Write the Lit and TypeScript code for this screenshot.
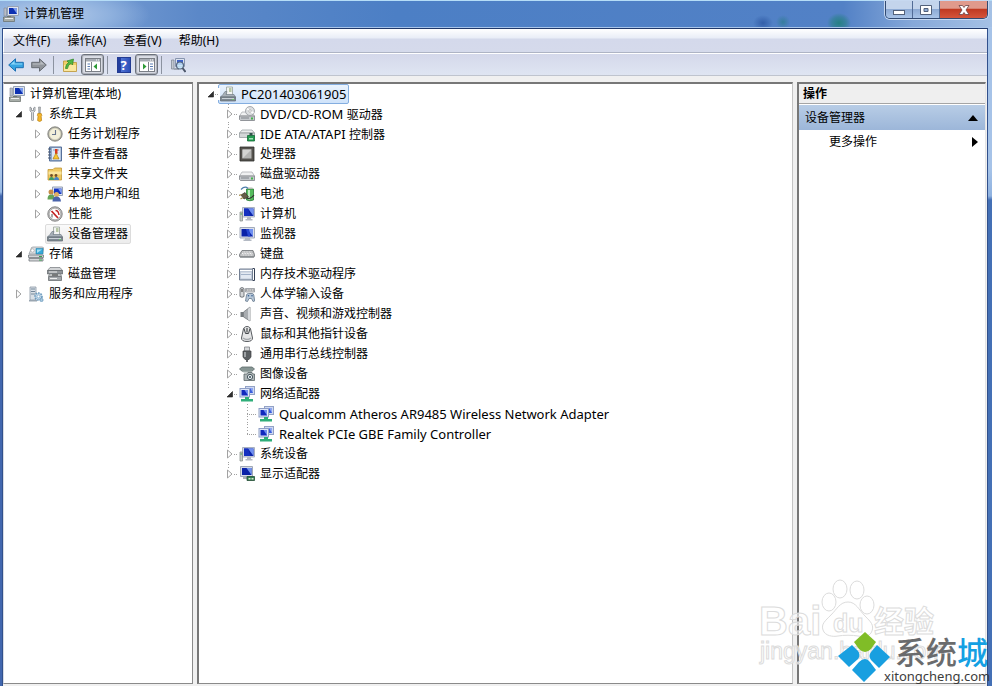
import { LitElement, html, svg, css, nothing, SVGTemplateResult } from "lit";
import { customElement, property, state } from "lit/decorators.js";
import { classMap } from "lit/directives/class-map.js";

/* ---------- shared icon fragments, all on a 16x16 grid ---------- */

const monitor = svg`
  <path d="M3.500 1.500h12v9.500h-12z" fill="#d5dbe8" stroke="#a9b1c1"/>
  <path d="M5 2.500h9.500v7.500H5z" fill="#0a22a8"/>
  <path d="M9 2.500h5.500v7.500z" fill="#6f8ff0"/>
  <path d="M5 2.500h4l2.500 7.500H5z" fill="#1430c0"/>
  <path d="M8 11h4v2H8zM6.500 13h7v1.500h-7z" fill="#b4bac4"/>`;
const drive = svg`
  <path d="M3 6h10l2.500 4H.5z" fill="#f0f1f2" stroke="#aeb1b5" stroke-width=".8"/>
  <path d="M.5 10h15v4.500H1.500L.5 13.500z" fill="#c5c8cc" stroke="#7d8187" stroke-width=".8"/>
  <path d="M2 12h8" stroke="#80858b"/><path d="M12 11.500h2v2h-2z" fill="#42b44b"/>`;
const netScreens = svg`
  <rect x="6.500" y=".5" width="9" height="8" fill="#cfd9f2" stroke="#93a2c6"/>
  <rect x="8" y="2" width="6" height="5" fill="#3a5ddb"/><path d="M11 2h3v5z" fill="#8ea7f2"/>
  <rect x="1" y="2.500" width="9.500" height="8.500" fill="#dfe7f9" stroke="#8f9fc6"/>
  <rect x="2.500" y="4" width="6.500" height="5.500" fill="#1029bd"/>
  <path d="M5.500 4H9v5.500z" fill="#6f8ef0"/>
  <path d="M6 11h4v2h4v2.500H2V13h4z" fill="#2fae79"/>`;
const devices = svg`
  <path d="M6.500 1h6v9h-6z" fill="#f3f5f3" stroke="#98a29b" stroke-width=".8"/>
  <path d="M9 2h2.500v4H9z" fill="#b8c8a5"/>
  <path d="M3 8.500l2-3h2l-1 3h8l1.500 2.500H.5z" fill="#a9b2b9" stroke="#74808a" stroke-width=".7"/>
  <path d="M.5 11h15v4H.5z" fill="#7f8a93" stroke="#5e6870" stroke-width=".7"/>
  <path d="M2 12.500h12" stroke="#c9d1d7"/><path d="M12 13.500h2" stroke="#6cc26d"/>`;
const manage = svg`
  <path d="M4.500 .5h11v9h-11z" fill="#dfe5ee" stroke="#97a2b5"/>
  <path d="M6 2h8v6H6z" fill="#0d31b2"/><path d="M10 2h4v6z" fill="#7b9bea"/>
  <path d="M1 2h2.500v8H1z" fill="#b8bec8" stroke="#7f8896" stroke-width=".6"/>
  <path d="M8 10h4v2H8z" fill="#a7adb7"/>
  <path d="M.5 11h11v4.500H.5z" fill="#a7ada8" stroke="#646b67" stroke-width=".7"/>
  <path d="M2 12.500h8" stroke="#eee"/><path d="M4 10h4v1H4z" fill="#6f7774"/>`;
const paneFrame = svg`
  <rect x=".5" y="1.500" width="15" height="13" fill="#fff" stroke="#7b7f86"/>
  <path d="M1 2h14v2.500H1z" fill="#a6abb3"/><path d="M11 3h1M13 3h1" stroke="#fff"/>`;

const icons: Record<string, SVGTemplateResult> = {
  manage,
  devices,
  monitor: svg`
    <path d="M1 1.500h14.500V12H1z" fill="#dbe0ea" stroke="#a3abbb"/>
    <path d="M2.500 3H14v7.500H2.500z" fill="#0a22a8"/>
    <path d="M8 3h6v7.500z" fill="#6f8ff0"/><path d="M7 3h3l1.500 7.500H9z" fill="#2747d2"/>
    <path d="M6 12h5v1.500H6zM4.500 13.500h8V15h-8z" fill="#b4bac4"/>`,
  tools: svg`
    <path d="M2 1v4l1.500 1.500V14q1 2 2 0V6.500L7 5V1L5.500 2v2.500h-2V2z" fill="#d9dbdd" stroke="#888d93" stroke-width=".8"/>
    <path d="M10.500 1h2l-.3 6h-1.400z" fill="#b7babd" stroke="#85898d" stroke-width=".6"/>
    <path d="M9.800 7.500h3.400l.6 2-.6 1 .4 4q-2 2-4 0l.4-4-.6-1z" fill="#f5b529" stroke="#b87f12" stroke-width=".7"/>`,
  clock: svg`
    <circle cx="8" cy="8" r="7.200" fill="#a9a9a4" stroke="#77776f" stroke-width=".8"/>
    <circle cx="8" cy="8" r="5.700" fill="#f2efda" stroke="#d9d5ba" stroke-width=".6"/>
    <path d="M8.500 4v4.500H5" fill="none" stroke="#67758e" stroke-width="1.100"/>`,
  events: svg`
    <path d="M2.500 1h12v14h-12z" fill="#8fa9cb" stroke="#56709a"/>
    <path d="M5 2h8.500v12H5z" fill="#dce7f5"/>
    <path d="M1 3h3M1 6h3M1 9h3M1 12h3" stroke="#49566c"/>
    <path d="M6 4h6M6 12h6" stroke="#8499b7"/>
    <path d="M8 3h2.500v5H8z" fill="#d8391e"/>
    <path d="M9 7l3 6H6z" fill="#f9c52f" stroke="#aa7a0d" stroke-width=".6"/>`,
  shared: svg`
    <path d="M1 3.500h5l1.500-1.500H14.500v12H1z" fill="#efc962" stroke="#c29837" stroke-width=".8"/>
    <path d="M1.500 5.500h13v3h-13z" fill="#f9e59d"/>
    <circle cx="4.500" cy="9.500" r="1.400" fill="#71502a"/><circle cx="9" cy="9.500" r="1.400" fill="#71502a"/>
    <path d="M2 14q0-3 2.500-3t2.500 3z" fill="#3c9c67"/><path d="M7 14q0-3 2.500-3t2.500 3z" fill="#4683c4"/>`,
  users: svg`
    <path d="M5.500 1h10v8.500h-10z" fill="#dfe5ee" stroke="#97a2b5"/><path d="M7 2.500h7.500v5.500H7z" fill="#1535c0"/>
    <path d="M11 2.500h3.500v5.500z" fill="#7f9cf0"/>
    <circle cx="4" cy="6" r="2.500" fill="#c58c48"/><path d="M.5 13.500q0-5 3.500-5t4 5z" fill="#64a457"/>
    <circle cx="9.500" cy="8.500" r="2.500" fill="#e0b063"/><path d="M5.500 15.500q0-5 4-5t4.500 5z" fill="#4963ab"/>`,
  perf: svg`
    <circle cx="8" cy="8" r="7.200" fill="#c6c6c6" stroke="#777" stroke-width=".9"/>
    <circle cx="8" cy="8" r="5.800" fill="#fff" stroke="#8f8f8f" stroke-width=".6"/>
    <path d="M4.500 5l6.500 7" stroke="#c22222" stroke-width="1.800"/>
    <path d="M8.500 4.500q3 0 3.500 4.500" fill="none" stroke="#c22222" stroke-width="1.400"/>
    <path d="M5 8v3.500" stroke="#555"/>`,
  storage: svg`
    <path d="M3 3q0-2 2-2h9q2 0 1.500 2l-1 5H1z" fill="#dcdfe2" stroke="#8e949a" stroke-width=".7"/>
    <path d="M8 2.500h7v5.500H8z" fill="#39a9d8" stroke="#2784ad" stroke-width=".6"/><path d="M9 3.500h5L9 7z" fill="#a7e1f5"/>
    <circle cx="4.500" cy="4.500" r="1.700" fill="#fff" stroke="#999" stroke-width=".6"/>
    <path d="M.5 9h15v2.500H.5zM1 12.500h14V15H1z" fill="#d4d6d9" stroke="#73787d" stroke-width=".8"/>
    <path d="M11 10.500h3M11 14h3" stroke="#39a34c"/>`,
  diskmgmt: svg`
    <path d="M3 1.500h10l2.500 3H.5z" fill="#d2d4d6" stroke="#74787c" stroke-width=".7"/>
    <path d="M.5 4.500h15v3.500H.5z" fill="#909498" stroke="#5d6165" stroke-width=".7"/>
    <path d="M3 8h10l1.500 2h-13z" fill="#e7e8e9" stroke="#74787c" stroke-width=".7"/>
    <path d="M1.500 10.500h13v4h-13z" fill="#a2a6aa" stroke="#5d6165" stroke-width=".7"/>
    <path d="M2 6h8M3 12.500h7" stroke="#eee"/><path d="M5 9h6" stroke="#333"/>`,
  services: svg`
    <path d="M2 1h6v13H2z" fill="#d9e0e6" stroke="#8b98a5" stroke-width=".8"/>
    <path d="M3 3h4M3 5.500h4M3 8h4" stroke="#75889a"/>
    <path d="M1 14h8v1.500H1z" fill="#9aa6b1"/>
    <circle cx="10.500" cy="10.500" r="3.500" fill="#bfd6e8" stroke="#6c9abd" stroke-width="1.600" stroke-dasharray="1.600 1"/>
    <circle cx="10.500" cy="10.500" r="1.400" fill="#fff" stroke="#6c9abd" stroke-width=".6"/>
    <circle cx="13.500" cy="14" r="1.600" fill="#a7c7df" stroke="#6c9abd" stroke-width=".8"/>`,
  dvd: svg`
    ${drive}<circle cx="11" cy="5" r="4.500" fill="#dddfe1" stroke="#94989d" stroke-width=".8"/>
    <path d="M11 5L8 2.500M11 5l3.500 2" stroke="#fff" stroke-width="1.500"/>
    <circle cx="11" cy="5" r="1.300" fill="#fff" stroke="#999" stroke-width=".6"/>`,
  ide: svg`
    <path d="M3 4h10l2.500 3H.5z" fill="#eceeee" stroke="#9da3a6" stroke-width=".8"/>
    <path d="M.5 7h15v4.500H.5z" fill="#d3d7d8" stroke="#8d9396" stroke-width=".7"/>
    <path d="M8.500 9.500h7v5.500h-7z" fill="#239b50" stroke="#0f6c34" stroke-width=".8"/>
    <path d="M10 12h4v1.500h-4z" fill="#a4dfb7"/><path d="M10.500 7h3v2.500h-3z" fill="#31544b"/>`,
  cpu: svg`
    <path d="M1 1h14v14H1z" fill="#55534e" stroke="#2e2d2b" stroke-width=".8"/>
    <path d="M3.500 3.500h9v9h-9z" fill="#b4b4b2"/><path d="M3.500 3.500h9l-9 9z" fill="#d4d4d2"/>`,
  disk: drive,
  battery: svg`
    <path d="M7.500 3h7v11q-3.500 1.500-7 0z" fill="#56bd5e" stroke="#277b35" stroke-width=".8"/>
    <path d="M9 4h2v9.500H9z" fill="#c1ebc0"/><path d="M8.500 1.500h5V3h-5z" fill="#b8bdb4"/>
    <path d="M2 3.500q4-4 7-1" fill="none" stroke="#4b7cab" stroke-width="1.200"/>
    <path d="M2 9L6 6.500l3.500 4.500L5 13z" fill="#665c49" stroke="#393328" stroke-width=".7"/>
    <path d="M0 9.500l2.500-1M1.500 13L4 11.500" stroke="#a58d4d" stroke-width="1.300"/>
    <path d="M8 12q3 2 7 -3" fill="none" stroke="#333" stroke-width="1.200"/>`,
  computer: svg`${monitor}<path d="M1 6h2.500v9H1z" fill="#c6cbc8" stroke="#7e8784" stroke-width=".7"/>
    <path d="M1.500 8h1.500" stroke="#3da34c"/>`,
  keyboard: svg`
    <path d="M3 4.500h11l1.500 4v1.500q0 1-1 1h-13q-1 0-1-1V8.500z" fill="#b4b6b8" stroke="#6e7276" stroke-width=".8"/>
    <path d="M3.500 6h9.500M3 7.500h10.500M2.500 9h11.500" stroke="#f4f4f4" stroke-dasharray="1 .6"/>
    <path d="M1 11h14" stroke="#7d8185"/>`,
  memory: svg`
    <path d="M.5 3h13v11H.5z" fill="#bfc9d8" stroke="#667489" stroke-width=".9"/>
    <path d="M2 6.500h10v6H2z" fill="#e3e9f2"/><path d="M1 4.500h12" stroke="#fff"/>
    <path d="M13.500 2.500h2v12h-2" fill="none" stroke="#354156"/>
    <path d="M2 8.500h10" stroke="#a4b3c9"/>`,
  hid: svg`
    <path d="M1 2.500q2-2 4 0v8q-2 1.500-4 0z" fill="#d5d7d9" stroke="#666b70" stroke-width=".9"/>
    <path d="M3 3v3" stroke="#333"/>
    <path d="M6.500 2.500h9v3.500h-9z" fill="#d6d8da" stroke="#878b90" stroke-width=".7"/><path d="M7 4h8" stroke="#777" stroke-dasharray="1 .7"/>
    <path d="M6.500 15l1-6q.3-1.500 2-1.500h3.500q1.500 0 1.800 1.500l.9 6-1.700.5-1.500-3H10l-1.500 3z" fill="#b6c6d7" stroke="#66788d" stroke-width=".8"/>
    <circle cx="9.500" cy="9.700" r=".8" fill="#375f91"/><circle cx="13" cy="9.700" r=".8" fill="#375f91"/>`,
  sound: svg`
    <path d="M1.500 6h3v5h-3z" fill="#777c80"/>
    <path d="M4.500 6L11 1v14l-6.500-4z" fill="#a9adb1" stroke="#6b7074" stroke-width=".7"/>
    <path d="M9 3l2-2v14l-2-1.500z" fill="#d7dadd"/>`,
  mouse: svg`
    <path d="M4 5q.5-4.500 4-4.500T12 5l1.500 7q0 3.500-5.500 3.500T2.500 12z" fill="#e5e6e7" stroke="#585c60"/>
    <path d="M5 2.500l1.500 5h3l1.500-5" fill="none" stroke="#43474b"/><path d="M7.500 2h1v4.500h-1z" fill="#292c2f"/>
    <path d="M4 12q4 3 8 0" fill="none" stroke="#a5a9ad" stroke-width="1.500"/>`,
  usb: svg`
    <path d="M5.500 1h5v4h-5z" fill="#d6d8da" stroke="#7d8185" stroke-width=".8"/>
    <path d="M4 5h8v6l-2 2.500H6L4 11z" fill="#5c6063" stroke="#3c3f42" stroke-width=".7"/>
    <path d="M5 6h2v5H5z" fill="#9fa3a6"/><path d="M8 13v3" stroke="#55595d" stroke-width="1.800"/>`,
  imaging: svg`
    <path d="M.5 3L3 1h10l2.500 2-3 2.500h-9z" fill="#879694" stroke="#5d6b69" stroke-width=".8"/>
    <path d="M3 5.500h11L12 7H5z" fill="#c8d2d0"/>
    <path d="M5 8h3l1-1.500h4L14 8h1.500v6.500H5z" fill="#acb5b6" stroke="#5c6668" stroke-width=".8"/>
    <circle cx="11" cy="11" r="2.600" fill="#ecf3f6" stroke="#46545c"/><circle cx="11" cy="11" r="1" fill="#34474f"/>`,
  network: netScreens,
  display: svg`
    <path d="M1.500 .5h12v10h-12z" fill="#d5dbe8" stroke="#a1a9b7"/>
    <path d="M3 2h9.500v7H3z" fill="#0a22a8"/><path d="M7.500 2h5v7z" fill="#7092ec"/>
    <path d="M4 11h5v2H4z" fill="#abb1bb"/>
    <path d="M8 10.500h7.500v4H8z" fill="#2d8050" stroke="#244c35" stroke-width=".8"/>
    <path d="M9.500 12h2v1.500h-2zM12.500 12h2v1.500h-2z" fill="#dbe7cb"/>`,
  back: svg`<path d="M.7 8L7.500 1.800V5.300H15.300V10.700H7.500v3.500z" fill="#37a5e2" stroke="#1c70b2" stroke-linejoin="round"/>
    <path d="M2.500 7.500L6.500 4v2.500h7.800v1z" fill="#8fd7f8"/>`,
  forward: svg`<path d="M15.300 8L8.500 1.800V5.300H.7V10.700H8.500v3.500z" fill="#91959b" stroke="#666b72" stroke-linejoin="round"/>
    <path d="M13.500 7.500L9.500 4v2.500H1.700v1z" fill="#b9bdc2"/>`,
  up: svg`<path d="M1.500 4h4.500l1.500 1.500H14.500v9h-13z" fill="#f0cf6b" stroke="#bd973a" stroke-width=".8"/>
    <path d="M2 8h12v6H2z" fill="#fae7a0"/>
    <path d="M3.500 11.500q0-4 3-6L5 4l6.500-2-1 6-1.500-1.500q-3 1-3.500 5z" fill="#51b644" stroke="#2b8424" stroke-width=".7"/>`,
  treepane: svg`${paneFrame}<path d="M6.500 5v9" stroke="#7b7f86" fill="none"/>
    <path d="M2.500 7h2.500M2.500 9.500h2.500M2.500 12h2.500" stroke="#5a7db3"/>
    <path d="M12 6.500v6L8.500 9.500z" fill="#2e9a36"/>`,
  actionpane: svg`${paneFrame}<path d="M9.500 5v9" stroke="#7b7f86"/>
    <path d="M11 7h3M11 9.500h3M11 12h3" stroke="#5a7db3"/><path d="M4 6.500v6L7.500 9.500z" fill="#2e9a36"/>`,
  scan: svg`
    <path d="M5.500 1.500h9v8h-9z" fill="#dce3f0" stroke="#8895ae"/><path d="M7 3h6v5H7z" fill="#3e61c8"/>
    <path d="M1.500 3h2.500v9H1.500z" fill="#c2c8d0" stroke="#7a8391" stroke-width=".7"/>
    <path d="M4 11h5v2H4z" fill="#a0a7b4"/>
    <circle cx="10" cy="8.500" r="3.500" fill="#c6e4f7" fill-opacity=".85" stroke="#56677f" stroke-width="1.200"/>
    <path d="M12.500 11l3 4" stroke="#4b5568" stroke-width="2"/>`,
};

const icon = (name: string) =>
  html`<svg class="icon" viewBox="0 0 16 16" width="16" height="16" aria-hidden="true">${icons[name]}</svg>`;

interface Node {
  label: string;
  icon: string;
  open?: boolean;
  selected?: boolean;
  children?: Node[];
}

const n = (label: string, icon: string, children?: Node[], open = false): Node => ({ label, icon, children, open });

const consoleTree: Node = n("计算机管理(本地)", "manage", [
  n("系统工具", "tools", [
    n("任务计划程序", "clock", []),
    n("事件查看器", "events", []),
    n("共享文件夹", "shared", []),
    n("本地用户和组", "users", []),
    n("性能", "perf", []),
    { label: "设备管理器", icon: "devices", selected: true },
  ], true),
  n("存储", "storage", [n("磁盘管理", "diskmgmt")], true),
  n("服务和应用程序", "services", []),
], true);

const deviceTree: Node = {
  ...n("PC201403061905", "devices", [
    n("DVD/CD-ROM 驱动器", "dvd", []),
    n("IDE ATA/ATAPI 控制器", "ide", []),
    n("处理器", "cpu", []),
    n("磁盘驱动器", "disk", []),
    n("电池", "battery", []),
    n("计算机", "computer", []),
    n("监视器", "monitor", []),
    n("键盘", "keyboard", []),
    n("内存技术驱动程序", "memory", []),
    n("人体学输入设备", "hid", []),
    n("声音、视频和游戏控制器", "sound", []),
    n("鼠标和其他指针设备", "mouse", []),
    n("通用串行总线控制器", "usb", []),
    n("图像设备", "imaging", []),
    n("网络适配器", "network", [
      n("Qualcomm Atheros AR9485 Wireless Network Adapter", "network"),
      n("Realtek PCIe GBE Family Controller", "network"),
    ], true),
    n("系统设备", "computer", []),
    n("显示适配器", "display", []),
  ], true),
  selected: true,
};

@customElement("tree-view")
export class TreeView extends LitElement {
  @property({ attribute: false }) root!: Node;
  @property({ type: Boolean, reflect: true }) lines = false;
  @property({ type: Boolean }) bare = false;

  static styles = css`
    :host { display: block; }
    ul { list-style: none; margin: 0; padding: 0; }
    ul ul { padding-left: 19px; }
    .bare > li > ul { padding-left: 0; }
    .row { display: flex; align-items: center; height: 20px; }
    .toggle, .spacer { flex: none; position: relative; width: 19px; height: 12px; }
    .toggle { display: block; border: 0; padding: 0; background: none; }
    .toggle svg { display: block; margin: 0 auto; }
    .item {
      display: flex; align-items: center; gap: 5px; box-sizing: border-box; height: 20px;
      margin-left: -2px; padding: 0 2px 0 1px; border: 1px solid transparent; border-radius: 2px;
      white-space: nowrap;
    }
    .icon { flex: none; display: block; }
    :host([lines]) .latin { font-size: 13px; }
    .selected { border-color: #dcdcdc; background: linear-gradient(#fafafa, #ececec); }
    :host([lines]) .selected { border-color: #84aee0; background: linear-gradient(#eaf3fd, #cfe3fa); }
    :host([lines]) ul ul > li {
      background: repeating-linear-gradient(#a0a0a0 0 1px, transparent 1px 3px) 8px 0 / 1px 100% no-repeat;
    }
    :host([lines]) ul ul > li:last-child { background-size: 1px 10px; }
    :host([lines]) .toggle { background: #fff; }
    :host([lines]) .toggle::after, :host([lines]) .spacer::after {
      content: ""; position: absolute; top: 6px; right: 1px; width: 4px; height: 1px;
      background: repeating-linear-gradient(90deg, #a0a0a0 0 1px, transparent 1px 2px);
    }
    :host([lines]) .spacer::after { width: 10px; }
  `;

  private flip(node: Node) {
    node.open = !node.open;
    this.requestUpdate();
  }

  private arrow(node: Node) {
    if (!node.children) return html`<span class="spacer"></span>`;
    return html`<button class="toggle" aria-label=${node.label} aria-expanded=${node.open ? "true" : "false"}
      @click=${() => this.flip(node)}>
      <svg viewBox="0 0 8 12" width="8" height="12">
        ${node.open
          ? svg`<path d="M6.500 3.500v5.500H1z" fill="#303030" stroke="#1c1c1c" stroke-width=".6"/>`
          : svg`<path d="M1.500 2v8L6 6z" fill="#fff" stroke="#a2a2a2"/>`}
      </svg></button>`;
  }

  private label(text: string) {
    const m = /^[\x20-\x7e]+/.exec(text);
    return m ? html`<span><span class="latin">${m[0]}</span>${text.slice(m[0].length)}</span>` : html`<span>${text}</span>`;
  }

  private node(node: Node, top = false): unknown {
    return html`<li>
      <div class="row">
        ${top && this.bare ? nothing : this.arrow(node)}
        <span class=${classMap({ item: true, selected: !!node.selected })}>${icon(node.icon)}${this.label(node.label)}</span>
      </div>
      ${node.open && node.children?.length ? html`<ul>${node.children.map((c) => this.node(c))}</ul>` : nothing}
    </li>`;
  }

  render() {
    return html`<ul class=${classMap({ bare: this.bare })}>${this.node(this.root, true)}</ul>`;
  }
}

@customElement("site-marks")
export class SiteMarks extends LitElement {
  static styles = css`
    :host { display: block; pointer-events: none; }
    svg { display: block; }
    .ghost { fill: #fff; fill-opacity: .6; stroke: #dcdcdc; stroke-width: 1; }
    .bai { font: 700 40px "Liberation Sans", sans-serif; }
    .du { font: 700 25px "Liberation Sans", sans-serif; }
    .jy { font: 700 30px "Noto Sans CJK SC", sans-serif; }
    .url { font: 400 23px "Liberation Sans", sans-serif; }
    .name { font: 500 31px "Noto Sans CJK SC", sans-serif; fill: #6a6b6d; }
    .city { fill: #14a0e3; }
    .site { font: 400 13px "Noto Sans", sans-serif; fill: #3c3c3c; }
  `;

  render() {
    return html`<svg width="234" height="110" viewBox="0 0 234 110" aria-label="xitongcheng.com">
      <g class="ghost">
        <text class="bai" x="1" y="59">Bai</text>
        <ellipse cx="71" cy="26" rx="7" ry="9"/><ellipse cx="82" cy="13" rx="7" ry="9"/>
        <ellipse cx="99" cy="14" rx="7" ry="9"/><ellipse cx="109" cy="29" rx="7" ry="9"/>
        <path d="M90 26c8 0 11 8 17 14s9 9 7 15-9 6-14 5-15-1-20 0-13 0-15-6 2-9 8-15 9-13 17-13z"/>
        <text class="du" x="75" y="56">du</text>
        <text class="jy" x="116" y="56">经验</text>
        <text class="url" x="2" y="83">jingyan.baidu.com</text>
      </g>
      <g>
        <path d="M107 56l11 10-5 7q-6 6-12 0l-5-7z" fill="#80bd27"/>
        <path d="M94 69l6 6q3 4 0 8l-9 8-11-11z" fill="#189fe0"/>
        <path d="M119 69l13 12-11 11-8-8q-3-4 0-8z" fill="#189fe0"/>
        <path d="M107 83q3 0 5 3l6 8-12 12-12-12 7-8q3-3 6-3z" fill="#189fe0"/>
      </g>
      <text class="name" x="137" y="88">系统<tspan class="city">城</tspan></text>
      <text class="site" x="126" y="105">xitongcheng.com</text>
    </svg>`;
  }
}

@customElement("app-root")
export class AppRoot extends LitElement {
  @state() private menus = ["文件(F)", "操作(A)", "查看(V)", "帮助(H)"];

  static styles = css`
    :host {
      display: flex; flex-direction: column; position: relative; box-sizing: border-box;
      min-height: 100vh; padding: 0 4px 0 3px; color: #000;
      font: 12px/20px "Noto Sans", "Noto Sans CJK SC", sans-serif;
      background:
        linear-gradient(90deg, #31508c, #31508c) 2px 28px / 1px 100% no-repeat,
        linear-gradient(#b4cdec 0 130px, #9bbce5 164px, #4267ae 168px 100%) 0 28px / 3px 100% no-repeat,
        linear-gradient(#a6c3e8 0 140px, #8fb2e0 168px, #4470b5 172px 100%) 100% 28px / 4px 100% no-repeat,
        #f0f0f0;
    }
    button { font: inherit; color: inherit; margin: 0; }
    .title {
      display: flex; align-items: flex-start; justify-content: space-between;
      height: 28px; margin: 0 -4px 0 -3px; padding: 0 4px 0 3px;
      box-sizing: border-box; border-top: 1px solid #b5ddf7; border-bottom: 1px solid #a9c5ea;
      background:
        radial-gradient(ellipse 100px 30px at 50px 14px, #b9cfec, #8fb1de 60%, transparent),
        radial-gradient(ellipse 10px 8px at 763px 22px, #335fa9, transparent),
        radial-gradient(ellipse 12px 10px at 839px 22px, #268083, #26808388 60%, transparent),
        radial-gradient(ellipse 7px 7px at 783px 21px, #367d9d, transparent),
        linear-gradient(90deg, #8bacdb, #5b88c8 20%, #4c7fc5 40%, #5281c6 85%, #86a8d9 92%, #a5c1e5);
    }
    .caption { display: flex; align-items: center; gap: 5px; height: 26px; font-weight: 400; }
    h1, h2 { margin: 0; font-size: 12px; }
    h1 { font-weight: 400; }
    .icon { flex: none; display: block; }
    .winbtns {
      display: flex; height: 18px; box-sizing: border-box; border: 1px solid #324a72; border-top: 0;
      border-radius: 0 0 5px 5px; overflow: hidden; box-shadow: 0 0 0 1px #c6d8f0;
    }
    .winbtns button {
      display: grid; place-items: center; width: 27px; padding: 0; border: 0; border-right: 1px solid #526c97;
      background: linear-gradient(#c3d4ec 0 45%, #8daad4 50%, #a9c4e8);
    }
    .winbtns .close { width: 47px; border-right: 0; background: linear-gradient(#e09a8c 0 42%, #c03a22 50%, #d5553b); }
    .winbtns svg { display: block; }
    .frame { flex: 1; display: flex; flex-direction: column; border-top: 1px solid #20396b; border-right: 1px solid #31508c; }
    .menu {
      display: flex; align-items: center; gap: 17px; height: 23px; padding: 0 9px;
      border-bottom: 1px solid #aeb4c4; border-left: 1px solid #fff;
      background: linear-gradient(#fff, #e9edf7 9px, #d4d9eb 10px, #d5daeb);
    }
    .menu button { border: 0; padding: 0; background: none; }
    .tools {
      display: flex; align-items: center; height: 21px; padding: 0 1px;
      border-top: 1px solid #fff; border-bottom: 1px solid #bfc4ce;
      background: linear-gradient(#d4d8ea, #dfe5f2);
    }
    .tools button { display: grid; place-items: center; box-sizing: border-box; width: 23px; height: 21px; padding: 0; border: 1px solid transparent; background: none; }
    .tools .on { border-color: #6c727c; border-radius: 3px; background: #dcdfe7; box-shadow: inset 0 0 1px 1px #a9adb6; }
    .sep { width: 1px; height: 18px; margin: 0 4px 0 3px; background: #8c93a0; }
    .book { display: grid; place-items: center; width: 14px; height: 16px; box-sizing: border-box; border: 1px solid #233c92; background: linear-gradient(90deg, #233f9f 3px, #5175d5 3px, #2c4fb8); color: #fff; font: 700 13px/14px "Noto Sans", sans-serif; }
    .panes { flex: 1; display: flex; gap: 4px; padding: 6px 1px 2px 0; }
    .pane { box-sizing: border-box; border: 1px solid #8a8a8a; border-top: 2px solid #777; background: #fff; }
    .left { width: 190px; padding-left: 5px; border-left-color: #d8dce4; }
    .left, .right { flex: none; }
    .mid { flex: 1; min-width: 0; border-left: 2px solid #777; border-right-color: #c4c4c4; padding-left: 2px; }
    .right { width: 189px; border-left: 2px solid #777; border-right-color: #e4e4e4; }
    .right h2 { height: 19px; padding-left: 4px; background: #efefef; border-bottom: 1px solid #a5a5a5; font-weight: 700; }
    .group, .more { display: flex; justify-content: space-between; align-items: center; box-sizing: border-box; width: 100%; border: 0; text-align: left; }
    .group { height: 25px; margin-top: 1px; padding: 0 7px 0 6px; background: linear-gradient(#b8cde6, #9cb6d9); }
    .more { height: 24px; padding: 0 7px 0 30px; background: none; }
    .marks { position: absolute; right: 0; bottom: 0; }
  `;

  render() {
    return html`
      <header class="title">
        <div class="caption">${icon("manage")}<h1>计算机管理</h1></div>
        <div class="winbtns">
          <button aria-label="最小化"><svg width="14" height="14"><rect x="1.500" y="7.500" width="11" height="4" fill="#fff" stroke="#53617a"/></svg></button>
          <button aria-label="最大化"><svg width="14" height="14"><path d="M1.500 2.500h11v9h-11zM5 5.500h4v3H5z" fill="#fff" fill-rule="evenodd" stroke="#53617a"/></svg></button>
          <button class="close" aria-label="关闭"><svg width="14" height="14"><path d="M2 2.500h3.500L7 4.500l1.500-2H12L9 7l3 4.500H8.500L7 9.500l-1.500 2H2L5 7z" fill="#fff" stroke="#6a4145" stroke-width=".8"/></svg></button>
        </div>
      </header>
      <div class="frame">
        <nav class="menu">${this.menus.map((m) => html`<button>${m}</button>`)}</nav>
        <div class="tools" role="toolbar">
          <button aria-label="后退">${icon("back")}</button>
          <button aria-label="前进">${icon("forward")}</button>
          <span class="sep"></span>
          <button aria-label="上一级">${icon("up")}</button>
          <button class="on" aria-label="显示控制台树">${icon("treepane")}</button>
          <span class="sep"></span>
          <button aria-label="帮助"><span class="book">?</span></button>
          <button class="on" aria-label="显示操作窗格">${icon("actionpane")}</button>
          <span class="sep"></span>
          <button aria-label="扫描检测硬件改动">${icon("scan")}</button>
        </div>
        <main class="panes">
          <section class="pane left"><tree-view bare .root=${consoleTree}></tree-view></section>
          <section class="pane mid"><tree-view lines .root=${deviceTree}></tree-view></section>
          <aside class="pane right">
            <h2>操作</h2>
            <button class="group"><span>设备管理器</span><svg width="10" height="6"><path d="M0 6l5-6 5 6z"/></svg></button>
            <button class="more"><span>更多操作</span><svg width="6" height="10"><path d="M0 0l6 5-6 5z"/></svg></button>
          </aside>
        </main>
      </div>
      <site-marks class="marks"></site-marks>
    `;
  }
}
